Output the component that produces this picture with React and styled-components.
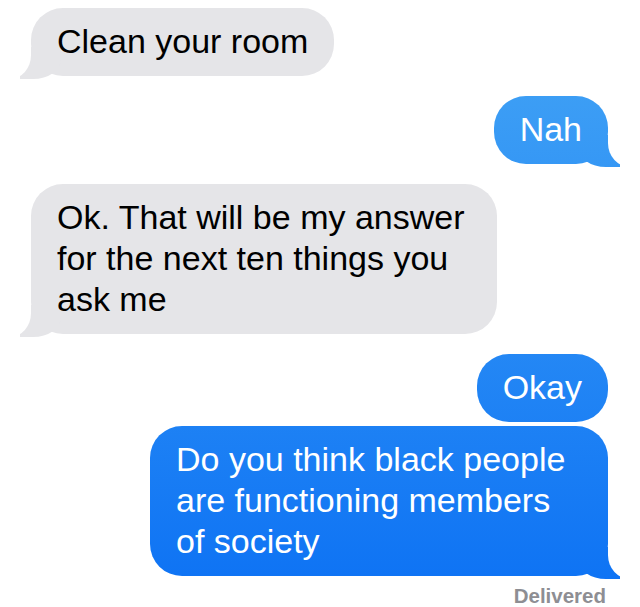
import React from 'react';
import styled, { createGlobalStyle, css } from 'styled-components';

const GlobalStyle = createGlobalStyle`
  html, body {
    margin: 0;
    padding: 0;
    background: #fff;
  }
  body {
    font-family: "Liberation Sans", Arial, Helvetica, sans-serif;
    -webkit-font-smoothing: antialiased;
    overflow: hidden;
  }
`;

// iOS 7 style: the blue is a screen-wide gradient seen through each bubble
const blueFill = css`
  background: linear-gradient(180deg, #45a6f5 0px, #0c71f4 607px) fixed;
`;

const grayFill = css`
  background: #e5e5e8;
`;

const tailMine = css`
  &::before {
    content: "";
    position: absolute;
    bottom: -3px;
    right: -12px;
    width: 42px;
    height: 32px;
    ${blueFill}
    border-bottom-left-radius: 28px 20px;
  }
  &::after {
    content: "";
    position: absolute;
    bottom: -3px;
    right: -32px;
    width: 32px;
    height: 32px;
    background: #fff;
    border-bottom-left-radius: 22px 24px;
  }
`;

const tailTheirs = css`
  &::before {
    content: "";
    position: absolute;
    bottom: -3px;
    left: -11px;
    width: 41px;
    height: 32px;
    ${grayFill}
    border-bottom-right-radius: 28px 20px;
  }
  &::after {
    content: "";
    position: absolute;
    bottom: -3px;
    left: -31px;
    width: 31px;
    height: 32px;
    background: #fff;
    border-bottom-right-radius: 21px 24px;
  }
`;

const Thread = styled.div`
  display: flex;
  flex-direction: column;
  width: 640px;
  height: 607px;
  box-sizing: border-box;
  padding: 8px 32px 0 31px;
`;

const Bubble = styled.div`
  position: relative;
  align-self: ${p => (p.$mine ? 'flex-end' : 'flex-start')};
  margin-top: ${p => p.$gap}px;
  padding: 13px 26px 14px;
  ${p => p.$width && `width: ${p.$width}px;`}
  box-sizing: border-box;
  border-radius: 32px;
  font-size: 34px;
  line-height: 41px;
  white-space: nowrap;
  color: ${p => (p.$mine ? '#fff' : '#000')};
  ${p => (p.$mine ? blueFill : grayFill)}
  ${p => p.$tail && (p.$mine ? tailMine : tailTheirs)}
`;

// text sits above the tail pieces
const Line = styled.span`
  position: relative;
  z-index: 1;
  display: block;
`;

const Status = styled.div`
  align-self: flex-end;
  margin-top: 10px;
  margin-right: 2px;
  font-size: 20.5px;
  line-height: 20px;
  font-weight: bold;
  color: #8e8e93;
`;

const messages = [
  { id: 1, mine: false, tail: true, lines: ['Clean your room'] },
  { id: 2, mine: true, tail: true, lines: ['Nah'] },
  {
    id: 3,
    mine: false,
    tail: true,
    width: 466,
    lines: ['Ok. That will be my answer', 'for the next ten things you', 'ask me'],
  },
  { id: 4, mine: true, tail: false, lines: ['Okay'] },
  {
    id: 5,
    mine: true,
    tail: true,
    width: 458,
    lines: ['Do you think black people', 'are functioning members', 'of society'],
  },
];

const App = () => (
  <>
    <GlobalStyle />
    <Thread>
      {messages.map((m, i) => {
        const prev = messages[i - 1];
        const gap = !prev ? 0 : prev.mine === m.mine ? 4 : 20;
        return (
          <Bubble key={m.id} $mine={m.mine} $tail={m.tail} $gap={gap} $width={m.width}>
            {m.lines.map((l, j) => (
              <Line key={j}>{l}</Line>
            ))}
          </Bubble>
        );
      })}
      <Status>Delivered</Status>
    </Thread>
  </>
);

export default App;
